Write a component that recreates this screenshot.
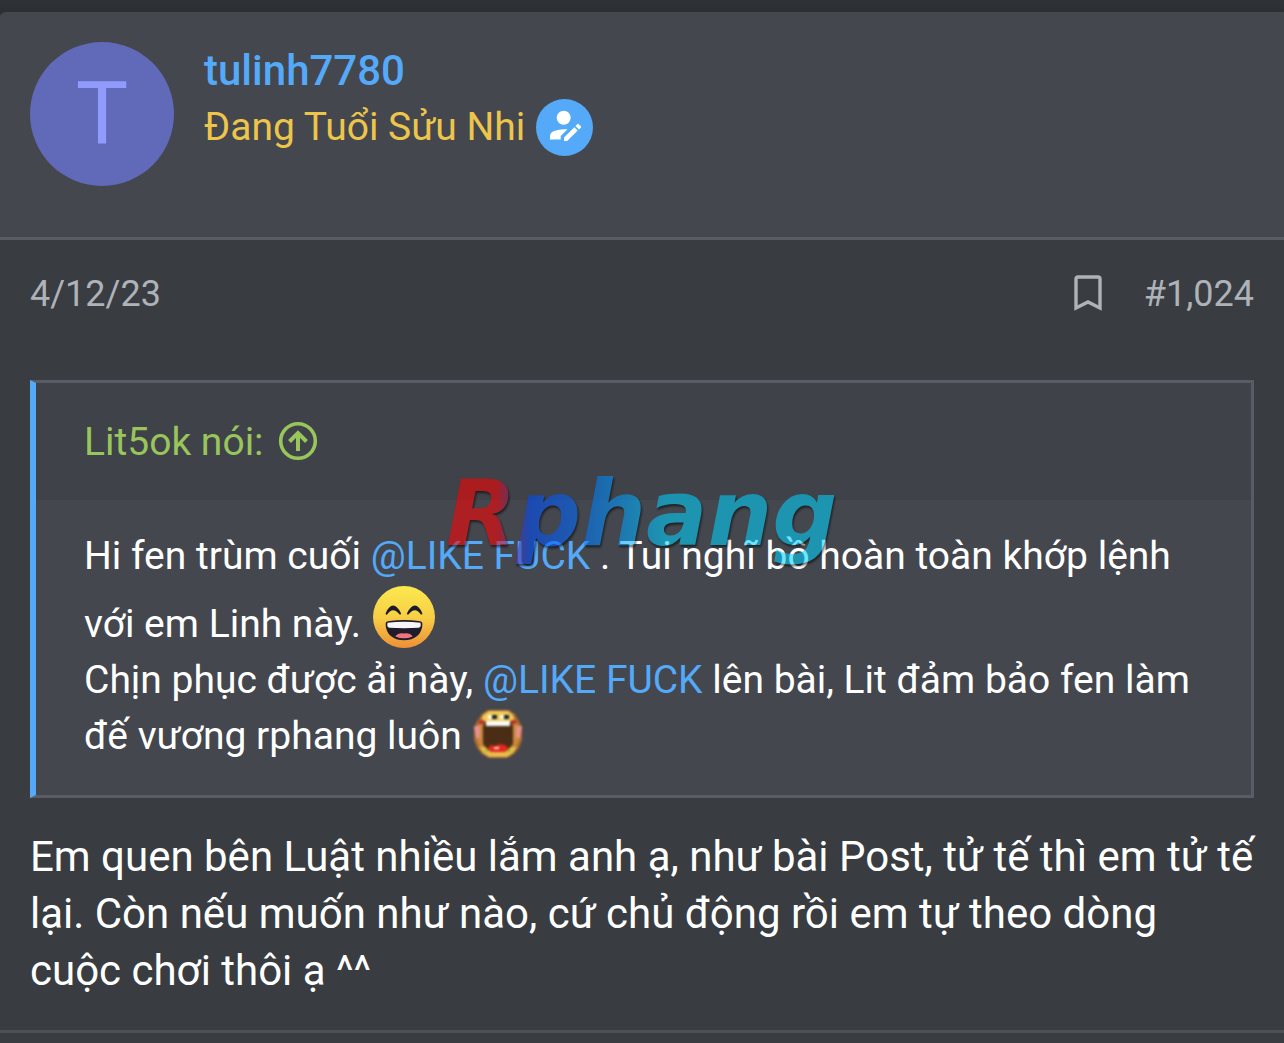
<svelte:head>
  <title>tulinh7780</title>
</svelte:head>

<div class="page">
  <article class="post">
    <header class="member">
      <a class="avatar" href="#member" aria-label="tulinh7780">T</a>
      <div class="identity">
        <h4><a href="#member">tulinh7780</a></h4>
        <p class="rank">
          <span>Đang Tuổi Sửu Nhi</span>
          <span class="badge" role="img" aria-label="Người viết">
            <svg viewBox="0 0 57 57" width="57" height="57" fill="#fff">
              <circle cx="27.700" cy="18.700" r="7" />
              <path d="M14 40.500V37Q14 33.500 18 32Q24 29.600 31.500 30.300L24.700 37V40.500z" />
              <path d="M28 42V38.600L38.400 28.200L41.700 31.500L31.200 42zM39.500 27L41.200 25.200Q42 24.500 42.800 25.200L44.800 27.200Q45.500 28 44.800 28.700L43 30.400z" />
            </svg>
          </span>
        </p>
      </div>
    </header>

    <section class="message">
      <div class="meta">
        <a class="date" href="#post"><time datetime="2023-12-04">4/12/23</time></a>
        <div class="actions">
          <button type="button" aria-label="Dấu trang">
            <svg viewBox="0 0 28 36" width="28" height="36" fill="none" stroke="#aeb2b9" stroke-width="3.400">
              <path d="M2 33V4q0-2 2-2H24q2 0 2 2V33L14 27z" />
            </svg>
          </button>
          <a href="#post">#1,024</a>
        </div>
      </div>

      <blockquote>
        <div class="source">
          <a href="#source">Lit5ok nói:
            <svg viewBox="0 0 40 40" width="40" height="40" fill="none" stroke="#98c55c">
              <circle cx="20" cy="20" r="17.300" stroke-width="3.600" />
              <path d="M20 30V13M11.500 20.500L20 12L28.500 20.500" stroke-width="4" />
            </svg>
          </a>
        </div>
        <div class="quote">
          Hi fen trùm cuối <a href="#user">@LIKE FUCK</a> . Tui nghĩ bồ hoàn toàn khớp lệnh với em Linh này.
          <svg class="grin" viewBox="0 0 64 64" role="img" aria-label="Cười lớn">
            <defs>
              <linearGradient id="skin" x2="0" y2="1">
                <stop offset="0" stop-color="#fbe94f" />
                <stop offset=".5" stop-color="#f7cf45" />
                <stop offset="1" stop-color="#ee8f36" />
              </linearGradient>
            </defs>
            <circle cx="32" cy="32" r="32" fill="url(#skin)" />
            <path d="M14 28.500Q20.500 14 28 28.500Q20.500 19.500 14 28.500zM36 28.500Q43.500 14 50 28.500Q43.500 19.500 36 28.500z" fill="#1e1b29" stroke="#1e1b29" stroke-width="2" stroke-linejoin="round" />
            <path d="M13 39Q13 36 17 36Q32 34 47 36Q51 36 51 39C51 50 43 56 32 56S13 50 13 39z" fill="#211c2b" />
            <path d="M15 38Q32 36 49 38Q50 43 47 43Q32 44 17 43Q14 43 15 38z" fill="#f5f5fa" />
            <path d="M23 52Q26 48 32 49Q38 48 41 52Q32 56 23 52z" fill="#ef7480" />
          </svg><br />
          Chịn phục được ải này, <a href="#user">@LIKE FUCK</a> lên bài, Lit đảm bảo fen làm đế vương rphang luôn
          <svg class="shout" viewBox="0 0 50 50" role="img" aria-label="Há miệng">
            <path d="M15 1H36L42 5L46 12L49 18V31L46 39L41 45L34 49H16L9 45L4 39L1 31V18L4 12L9 5z" fill="#a8682c" />
            <path d="M16 2H35L40 6L42 12H8L10 6z" fill="#f0ca58" />
            <path d="M6 14H11V39H7L3 30V19zM39 14H44L47 19V30L43 39H39z" fill="#c8873c" />
            <path d="M6 38H44L40 44L34 48H16L10 44z" fill="#e8bc4b" />
            <path d="M1 17H7V29H3zM43 17H49L47 29H43z" fill="#e9908b" />
            <path d="M6 11H11V15H6zM38 11H43V15H38z" fill="#bb3228" />
            <path d="M15 6H21V10H15zM27 6H33V10H27z" fill="#fffbe0" />
            <path d="M19 6H24V10H19zM31 6H36V10H31z" fill="#17202c" />
            <path d="M12 13H38L40 17V35L35 41H15L10 35V17z" fill="#4b2d16" />
            <path d="M13 12H37V17H13z" fill="#fafaf6" />
            <path d="M14 40L18 36L22 37L26 35L32 36L36 40L32 43H18z" fill="#e3281f" />
            <path d="M21 38H26V40H21z" fill="#ffd9d2" />
            <path d="M12 41H16V43H12zM34 41H38V43H34z" fill="#8fc92f" />
          </svg>
        </div>
        <div class="watermark" aria-hidden="true">Rphang</div>
      </blockquote>

      <p class="reply">Em quen bên Luật nhiều lắm anh ạ, như bài Post, tử tế thì em tử tế lại. Còn nếu muốn như nào, cứ chủ động rồi em tự theo dòng cuộc chơi thôi ạ ^^</p>
    </section>
    <footer></footer>
  </article>
</div>

<style>
  :global(body) {
    margin: 0;
    background: #393c40;
  }

  .page {
    padding-top: 12px;
    background: linear-gradient(#2f3337, #2b2e32) 0 0 / 100% 14px no-repeat;
    color: #fff;
    font: 42px/57px Roboto, sans-serif;
  }

  a {
    color: #54a9f8;
    text-decoration: none;
  }

  .post {
    background: #393c40;
    border-top-left-radius: 6px;
  }

  .member {
    display: flex;
    gap: 30px;
    min-height: 165px;
    padding: 30px;
    border-bottom: 3px solid #595c64;
    border-top-left-radius: 6px;
    background: #44474e;
  }

  .avatar {
    display: grid;
    place-items: center;
    flex: none;
    width: 144px;
    height: 144px;
    border-radius: 50%;
    background: #606ab9;
    color: #919bfb;
    font-size: 88px;
    line-height: 142px;
    align-content: start;
  }

  h4,
  .rank,
  .reply {
    margin: 0;
  }

  h4 {
    font-weight: 500;
    font-size: 42px;
  }

  .rank {
    display: flex;
    align-items: center;
    gap: 11px;
    color: #edc54b;
    font-size: 39px;
  }

  .badge {
    display: grid;
    place-items: center;
    width: 57px;
    height: 57px;
    border-radius: 50%;
    background: #54a9f8;
  }

  .message {
    padding: 24px 30px 31px;
  }

  .meta,
  .actions {
    display: flex;
    align-items: center;
    justify-content: space-between;
  }

  .meta {
    height: 60px;
    margin: 0 0 56px;
    font-size: 36px;
  }

  .meta a {
    color: #aeb2b9;
  }

  .actions {
    gap: 42px;
  }

  button {
    display: flex;
    padding: 0 0 2px;
    border: 0;
    background: none;
    cursor: pointer;
  }

  blockquote {
    position: relative;
    margin: 0 0 30px;
    border: 3px solid #595c64;
    border-left: 6px solid #54a9f8;
    background: #44474e;
    font-size: 39px;
    line-height: 56px;
  }

  .source {
    padding: 31px 48px 30px;
    background: #3f4248;
  }

  .source a {
    display: flex;
    align-items: center;
    gap: 14px;
    color: #98c55c;
  }

  .source svg {
    margin-bottom: 3px;
  }

  .quote {
    padding: 28px 48px 31px;
  }

  .grin {
    width: 62px;
    height: 62px;
    margin: 2px 0 0 2px;
    vertical-align: -11px;
  }

  .shout {
    width: 50px;
    height: 50px;
    margin-left: 2px;
    vertical-align: -10px;
    filter: blur(1px);
  }

  .watermark {
    position: absolute;
    top: 77px;
    left: 404px;
    padding: 0 6px;
    background: linear-gradient(90deg, #f00 14%, #004cff 22%, #0068ff 33%, #00d2ff 56%);
    background-clip: text;
    color: transparent;
    filter: drop-shadow(1px 2px 1px #000);
    font: italic bold 91px/108px "DejaVu Sans", sans-serif;
    opacity: 0.56;
    pointer-events: none;
  }

  footer {
    height: 11px;
    border-top: 3px solid #4d5056;
  }
</style>
